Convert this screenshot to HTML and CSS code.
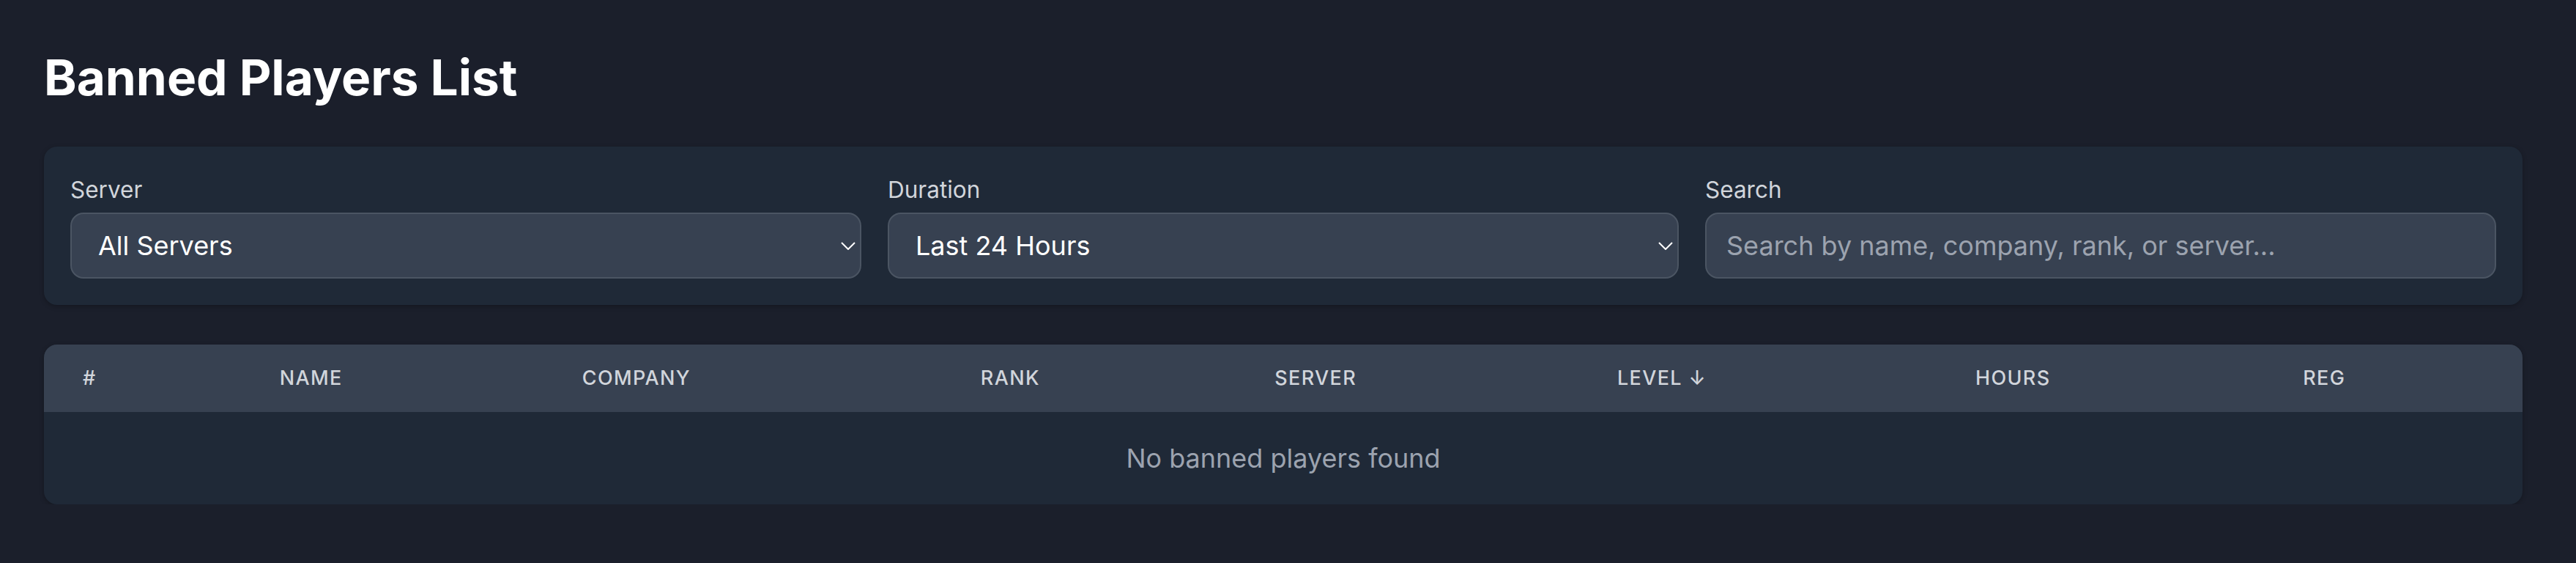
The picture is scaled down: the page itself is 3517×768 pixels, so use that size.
FILE: index.html
```html
<!DOCTYPE html>
<html lang="en">
<head>
<meta charset="utf-8">
<title>Banned Players List</title>
<link rel="stylesheet" href="styles.css">
</head>
<body>
<main class="page">
  <h1 class="title">Banned Players List</h1>

  <section class="filters">
    <div class="field">
      <label class="field-label" for="server">Server</label>
      <div class="select-wrap">
        <select id="server" class="control select">
          <option>All Servers</option>
        </select>
        <svg class="chevron" viewBox="0 0 20 11" aria-hidden="true"><polyline points="1,1 10,10 19,1"/></svg>
      </div>
    </div>
    <div class="field">
      <label class="field-label" for="duration">Duration</label>
      <div class="select-wrap">
        <select id="duration" class="control select">
          <option>Last 24 Hours</option>
        </select>
        <svg class="chevron" viewBox="0 0 20 11" aria-hidden="true"><polyline points="1,1 10,10 19,1"/></svg>
      </div>
    </div>
    <div class="field">
      <label class="field-label" for="search">Search</label>
      <input id="search" class="control input" type="text" placeholder="Search by name, company, rank, or server...">
    </div>
  </section>

  <div class="table-card">
    <table class="table">
      <thead>
        <tr>
          <th class="c-num">#</th>
          <th class="c-name">Name</th>
          <th class="c-company">Company</th>
          <th class="c-rank">Rank</th>
          <th class="c-server">Server</th>
          <th class="c-level">Level ↓</th>
          <th class="c-hours">Hours</th>
          <th class="c-reg">Reg</th>
        </tr>
      </thead>
      <tbody>
        <tr>
          <td class="empty" colspan="8">No banned players found</td>
        </tr>
      </tbody>
    </table>
  </div>
</main>
</body>
</html>
```

FILE: styles.css
```css
* { box-sizing: border-box; }

html, body {
  margin: 0;
  padding: 0;
  background: #1b1f2b;
}

body {
  font-family: Inter, "Noto Sans", "Liberation Sans", sans-serif;
  color: #ffffff;
}

.page {
  width: 3444px;
  padding: 65px 0 0 60px;
}

.title {
  margin: 0 0 54px 0;
  font-size: 67.5px;
  line-height: 81px;
  font-weight: 700;
  color: #ffffff;
}

.filters {
  display: grid;
  grid-template-columns: repeat(3, 1fr);
  gap: 36px;
  padding: 36px;
  background: #1f2937;
  border-radius: 18px;
  margin-bottom: 54px;
  box-shadow: 0 2px 6px rgba(0, 0, 0, 0.25);
}

.field {
  display: flex;
  flex-direction: column;
}

.field-label {
  display: block;
  font-size: 31.5px;
  line-height: 45px;
  color: #d1d5db;
  margin-bottom: 9px;
}

.select-wrap {
  position: relative;
}

.control {
  display: block;
  width: 100%;
  height: 90px;
  margin: 0;
  background: #374151;
  border: 2px solid #4b5563;
  border-radius: 18px;
  color: #ffffff;
  font-family: Inter, "Noto Sans", "Liberation Sans", sans-serif;
  font-size: 36px;
  outline: none;
}

.select {
  -webkit-appearance: none;
  appearance: none;
  padding: 0 60px 0 36px;
}

.input {
  padding: 0 27px;
}

.input::placeholder {
  color: #9ca3af;
  opacity: 1;
}

.chevron {
  position: absolute;
  right: 8px;
  top: 40px;
  width: 20px;
  height: 11px;
  fill: none;
  stroke: #ffffff;
  stroke-width: 2;
  pointer-events: none;
}

.table-card {
  width: 3384px;
  border-radius: 18px;
  overflow: hidden;
  background: #1f2937;
  box-shadow: 0 2px 6px rgba(0, 0, 0, 0.25);
}

.table {
  width: 100%;
  border-collapse: collapse;
  table-layout: fixed;
}

.table th {
  background: #374151;
  text-align: left;
  padding: 28px 0 28px 53px;
  font-size: 27px;
  line-height: 36px;
  font-weight: 500;
  letter-spacing: 1.35px;
  text-transform: uppercase;
  color: #d1d5db;
  white-space: nowrap;
}

.c-num { width: 268.6px; }
.c-name { width: 413.1px; }
.c-company { width: 543.9px; }
.c-rank { width: 401.4px; }
.c-server { width: 467.6px; }
.c-level { width: 488.9px; }
.c-hours { width: 447.2px; }
.c-reg { width: 352.6px; }

.empty {
  padding: 36px 54px;
  text-align: center;
  font-size: 36px;
  line-height: 54px;
  color: #9ca3af;
}
```
